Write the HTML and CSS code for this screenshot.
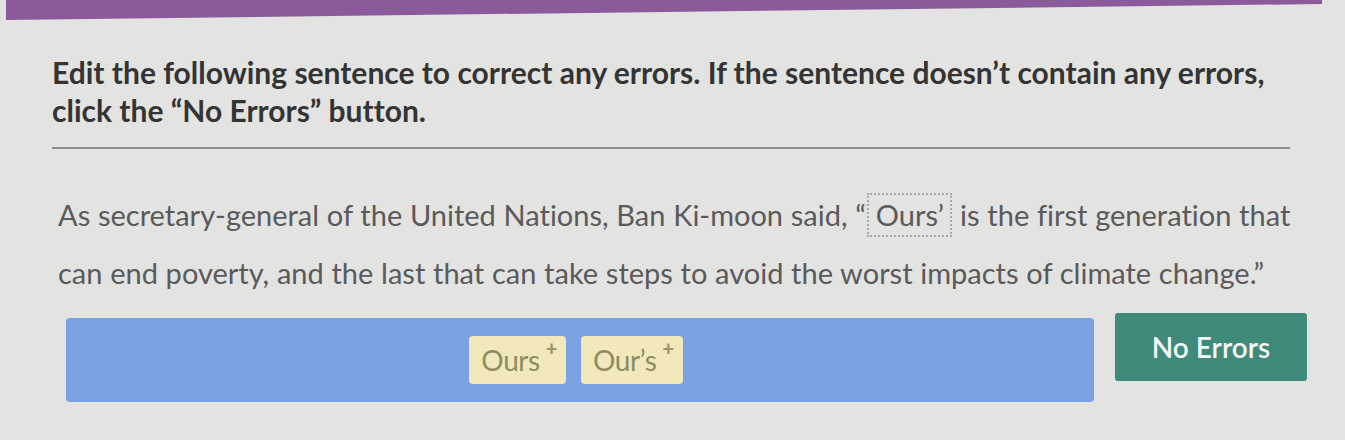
FILE: index.html
```html
<!DOCTYPE html>
<html lang="en">
<head>
<meta charset="utf-8">
<title>Edit sentence</title>
<link rel="stylesheet" href="styles.css">
</head>
<body>
<div class="topbar"></div>
<main class="content">
  <p class="prompt">Edit the following sentence to correct any errors. If the sentence doesn’t contain any errors, click the “No Errors” button.</p>
  <hr class="rule">
  <p class="sentence">As secretary-general of the United Nations, Ban Ki-moon said, “<span class="slot">Ours’</span>is the first generation that can end poverty, and the last that can take steps to avoid the worst impacts of climate change.”</p>
  <div class="answers">
    <div class="bank">
      <span class="chip">Ours<sup class="plus">+</sup></span>
      <span class="chip">Our’s<sup class="plus">+</sup></span>
    </div>
    <button class="noerr">No Errors</button>
  </div>
</main>
</body>
</html>
```
FILE: styles.css
```css
* { box-sizing: border-box; }
html, body { margin: 0; padding: 0; }
body {
  width: 1345px;
  height: 440px;
  overflow: hidden;
  background: #e3e3e2;
  font-family: Lato, "Noto Sans", sans-serif;
  font-variant-ligatures: none;
}
.topbar {
  margin-left: 6px;
  width: 1316px;
  height: 20px;
  background: #8a5a9a;
  clip-path: polygon(0 0, 100% 0, 100% 20%, 0 100%);
}
.content {
  padding: 0 36px 0 52px;
}
.prompt {
  margin: 33px 0 0 0;
  width: 1240px;
  font-size: 30px;
  line-height: 38px;
  font-weight: 700;
  color: #343434;
}
.rule {
  margin: 18px 0 0 0;
  border: 0;
  border-top: 2px solid #8c8c8c;
  width: 1238px;
}
.sentence {
  margin: 37px 0 0 6px;
  font-size: 29px;
  letter-spacing: 0;
  word-spacing: 0.3px;
  line-height: 58px;
  color: #5a5a5a;
}
.slot {
  display: inline-block;
  border: 2px dotted #a8a8a8;
  line-height: 40px;
  padding: 0 6px 0 7px;
  margin: 0 8px 0 1px;
}
.answers {
  display: flex;
  align-items: flex-start;
  margin-top: 16px;
  padding-left: 14px;
}
.bank {
  flex: 0 0 1028px;
  height: 84px;
  background: #7aa1e2;
  border-radius: 4px;
  display: flex;
  justify-content: center;
  align-items: center;
  gap: 15px;
  padding-right: 8px;
}
.chip {
  background: #f1e9bb;
  border-radius: 4px;
  color: #8e8d62;
  font-size: 28px;
  letter-spacing: -0.4px;
  height: 48px;
  line-height: 48px;
  padding: 0 9px 0 12px;
}
.plus {
  font-size: 20px;
  vertical-align: top;
  line-height: 24px;
  margin-left: 6px;
  font-weight: 900;
  color: #9c9670;
}
.noerr {
  flex: 0 0 192px;
  margin-left: 21px;
  margin-top: -5px;
  height: 68px;
  background: #3f8a7b;
  color: #f2f7f5;
  border: 0;
  border-radius: 3px;
  font-family: Lato, "Noto Sans", sans-serif;
  font-size: 28px;
  font-weight: 600;
}
```
